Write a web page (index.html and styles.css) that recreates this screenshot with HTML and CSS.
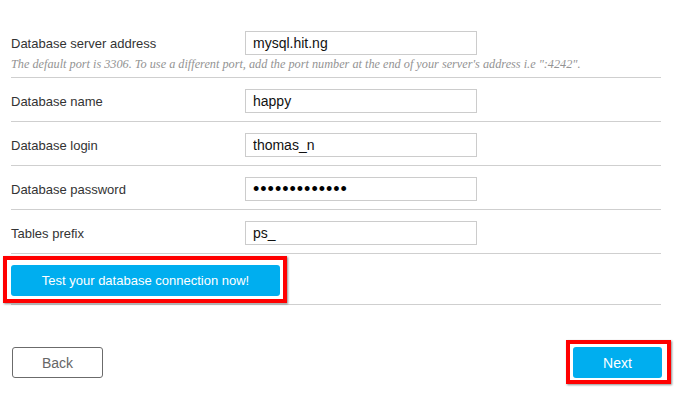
FILE: index.html
```html
<!DOCTYPE html>
<html lang="en">
<head>
  <meta charset="UTF-8">
  <title>Database configuration</title>
  <link rel="stylesheet" href="styles.css">
</head>
<body>
  <div class="setup">
    <div class="field field--first">
      <div class="field__row">
        <label class="field__label" for="dbServer">Database server address</label>
        <input class="field__input" type="text" id="dbServer" value="mysql.hit.ng">
      </div>
      <p class="field__hint">The default port is 3306. To use a different port, add the port number at the end of your server's address i.e ":4242".</p>
    </div>
    <div class="field">
      <div class="field__row">
        <label class="field__label" for="dbName">Database name</label>
        <input class="field__input" type="text" id="dbName" value="happy">
      </div>
    </div>
    <div class="field">
      <div class="field__row">
        <label class="field__label" for="dbLogin">Database login</label>
        <input class="field__input" type="text" id="dbLogin" value="thomas_n">
      </div>
    </div>
    <div class="field">
      <div class="field__row">
        <label class="field__label" for="dbPassword">Database password</label>
        <input class="field__input" type="password" id="dbPassword" value="secretpasswd1">
      </div>
    </div>
    <div class="field">
      <div class="field__row">
        <label class="field__label" for="dbPrefix">Tables prefix</label>
        <input class="field__input" type="text" id="dbPrefix" value="ps_">
      </div>
    </div>
    <div class="field field--test">
      <span class="mark mark--test">
        <button class="button button--blue button--test">Test your database connection now!</button>
      </span>
    </div>

    <div class="setup__nav">
      <button class="button button--ghost">Back</button>
      <span class="mark mark--next">
        <button class="button button--blue button--next">Next</button>
      </span>
    </div>
  </div>
</body>
</html>
```

FILE: styles.css
```css
html {
  box-sizing: border-box;
  background: #fff;
}

*, *:before, *:after {
  box-sizing: inherit;
}

body {
  margin: 0;
  font-family: 'Liberation Sans', Arial, sans-serif;
  color: #333;
}

.setup {
  width: 650px;
  margin-left: 11px;
  padding: 20px 0 30px;
}

/* Form rows */
.field {
  padding: 11px 0 8px;
  border-bottom: 1px solid #cfcfcf;
}

.field--first {
  padding: 11px 0 6px;
}

.field__row {
  display: flex;
  align-items: center;
}

.field__label {
  width: 234px;
  font-size: 13px;
  color: #333;
}

.field__input {
  width: 232px;
  height: 24px;
  margin: 0;
  padding: 0 7px;
  border: 1px solid #ccc;
  border-radius: 0;
  font-family: 'Liberation Sans', Arial, sans-serif;
  font-size: 14px;
  color: #111;
  outline: 0;
}

.field__input[type="password"] {
  font-size: 18px;
  letter-spacing: 1px;
  color: #000;
}

.field__hint {
  margin: 2px 0 0;
  font-family: 'Liberation Serif', Georgia, serif;
  font-style: italic;
  font-size: 12.25px;
  line-height: 14px;
  color: #939393;
}

.field--test {
  padding: 11px 0 8px;
  line-height: 0;
}

/* Buttons */
.button {
  display: block;
  height: 31px;
  margin: 0;
  border-radius: 3px;
  font-family: 'Liberation Sans', Arial, sans-serif;
  cursor: pointer;
}

.button--blue {
  border: 0;
  background: #00aeef;
  color: #fff;
}

.button--test {
  width: 269px;
  font-size: 13px;
}

.button--next {
  width: 89px;
  font-size: 14px;
}

.button--ghost {
  width: 91px;
  border: 1px solid #6b6b6b;
  background: #fff;
  color: #666;
  font-size: 14px;
}

/* Red annotation frames */
.mark {
  display: inline-flex;
  border: 4px solid #ff0000;
  box-shadow: 1px 1px 2px rgba(0, 0, 0, 0.45);
}

.mark--test {
  padding: 5px 3px 3px 4px;
  margin: -9px -7px -7px -8px;
}

.mark--next {
  padding: 3px 5px 2px 3px;
  margin: -7px -9px 0 -7px;
}

.setup__nav {
  display: flex;
  justify-content: space-between;
  align-items: flex-start;
  margin-top: 42px;
  padding-left: 1px;
  width: 651px;
}
```
